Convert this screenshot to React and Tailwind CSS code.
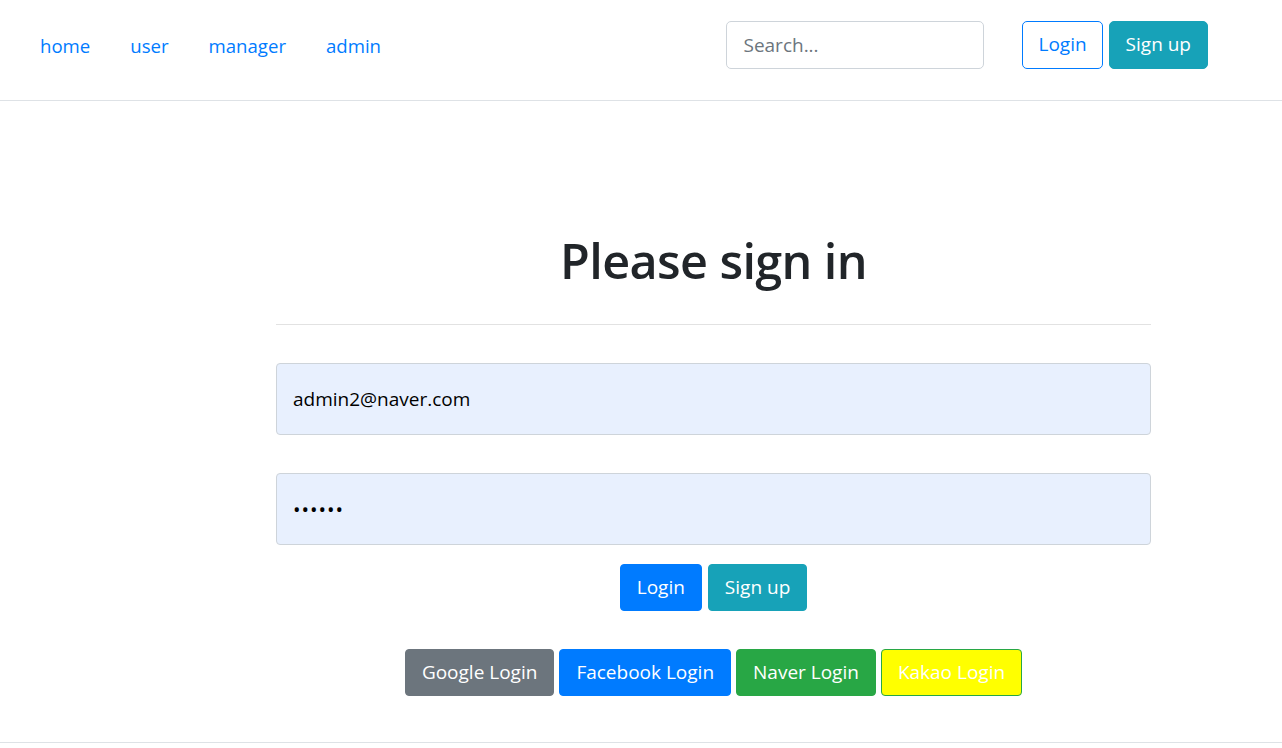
import React from 'react';

const font = { fontFamily: '"Open Sans", "Noto Sans", sans-serif' };

const NavBar = () => (
    <nav className="h-[101px] border-b border-[#dee2e6] flex items-center">
        <ul className="flex items-center pl-5 -mt-2">
            {['home', 'user', 'manager', 'admin'].map((l) => (
                <li key={l}>
                    <a href="#" className="block px-5 text-[18.6px] text-[#007bff]">{l}</a>
                </li>
            ))}
        </ul>
        <div className="ml-auto mr-[74px] flex items-center -mt-[11px]">
            <input
                type="text"
                placeholder="Search..."
                className="w-[258px] h-12 px-4 text-[19px] border border-[#ced4da] rounded-[5px] placeholder:text-[#6c757d] outline-none"
            />
            <button className="ml-[38px] h-12 px-[15px] text-[19px] text-[#007bff] border border-[#007bff] rounded-[5px]">Login</button>
            <button className="ml-1.5 h-12 px-4 text-[19px] text-white bg-[#17a2b8] border border-[#17a2b8] rounded-[5px]">Sign up</button>
        </div>
    </nav>
);

const Btn = ({ children, className }) => (
    <button className={`h-[47px] px-4 text-[19px] rounded-[4px] border ${className}`}>{children}</button>
);

export default function App() {
    return (
        <div style={font} className="w-[1282px] h-[748px] bg-white text-[#212529] overflow-hidden">
            <NavBar />
            <main className="ml-[276px] w-[875px]">
                <h1 className="mt-[130px] text-center text-[48.5px] leading-[1.2] font-semibold tracking-[-0.6px]">Please sign in</h1>
                <hr className="mt-[35px] border-0 border-t border-[#e2e2e2]" />
                <input
                    type="email"
                    defaultValue="admin2@naver.com"
                    className="mt-[38px] block w-full h-[72px] px-4 text-[19px] text-black bg-[#e8f0fe] border border-[#ced4da] rounded-[4px] outline-none"
                />
                <input
                    type="password"
                    defaultValue="123456"
                    className="mt-[38px] block w-full h-[72px] px-4 text-[20px] text-black bg-[#e8f0fe] border border-[#ced4da] rounded-[4px] outline-none tracking-[1px]"
                />
                <div className="mt-[19px] flex justify-center gap-1.5">
                    <Btn className="text-white bg-[#007bff] border-[#007bff]">Login</Btn>
                    <Btn className="text-white bg-[#17a2b8] border-[#17a2b8]">Sign up</Btn>
                </div>
                <div className="mt-[38px] flex justify-center gap-[5px]">
                    <Btn className="text-white bg-[#6c757d] border-[#6c757d]">Google Login</Btn>
                    <Btn className="text-white bg-[#007bff] border-[#007bff]">Facebook Login</Btn>
                    <Btn className="text-white bg-[#28a745] border-[#28a745]">Naver Login</Btn>
                    <Btn className="text-white bg-[#ffff00] border-[#28a745]">Kakao Login</Btn>
                </div>
            </main>
            <div className="mt-[46px] border-t border-[#dee2e6]" />
        </div>
    );
}
